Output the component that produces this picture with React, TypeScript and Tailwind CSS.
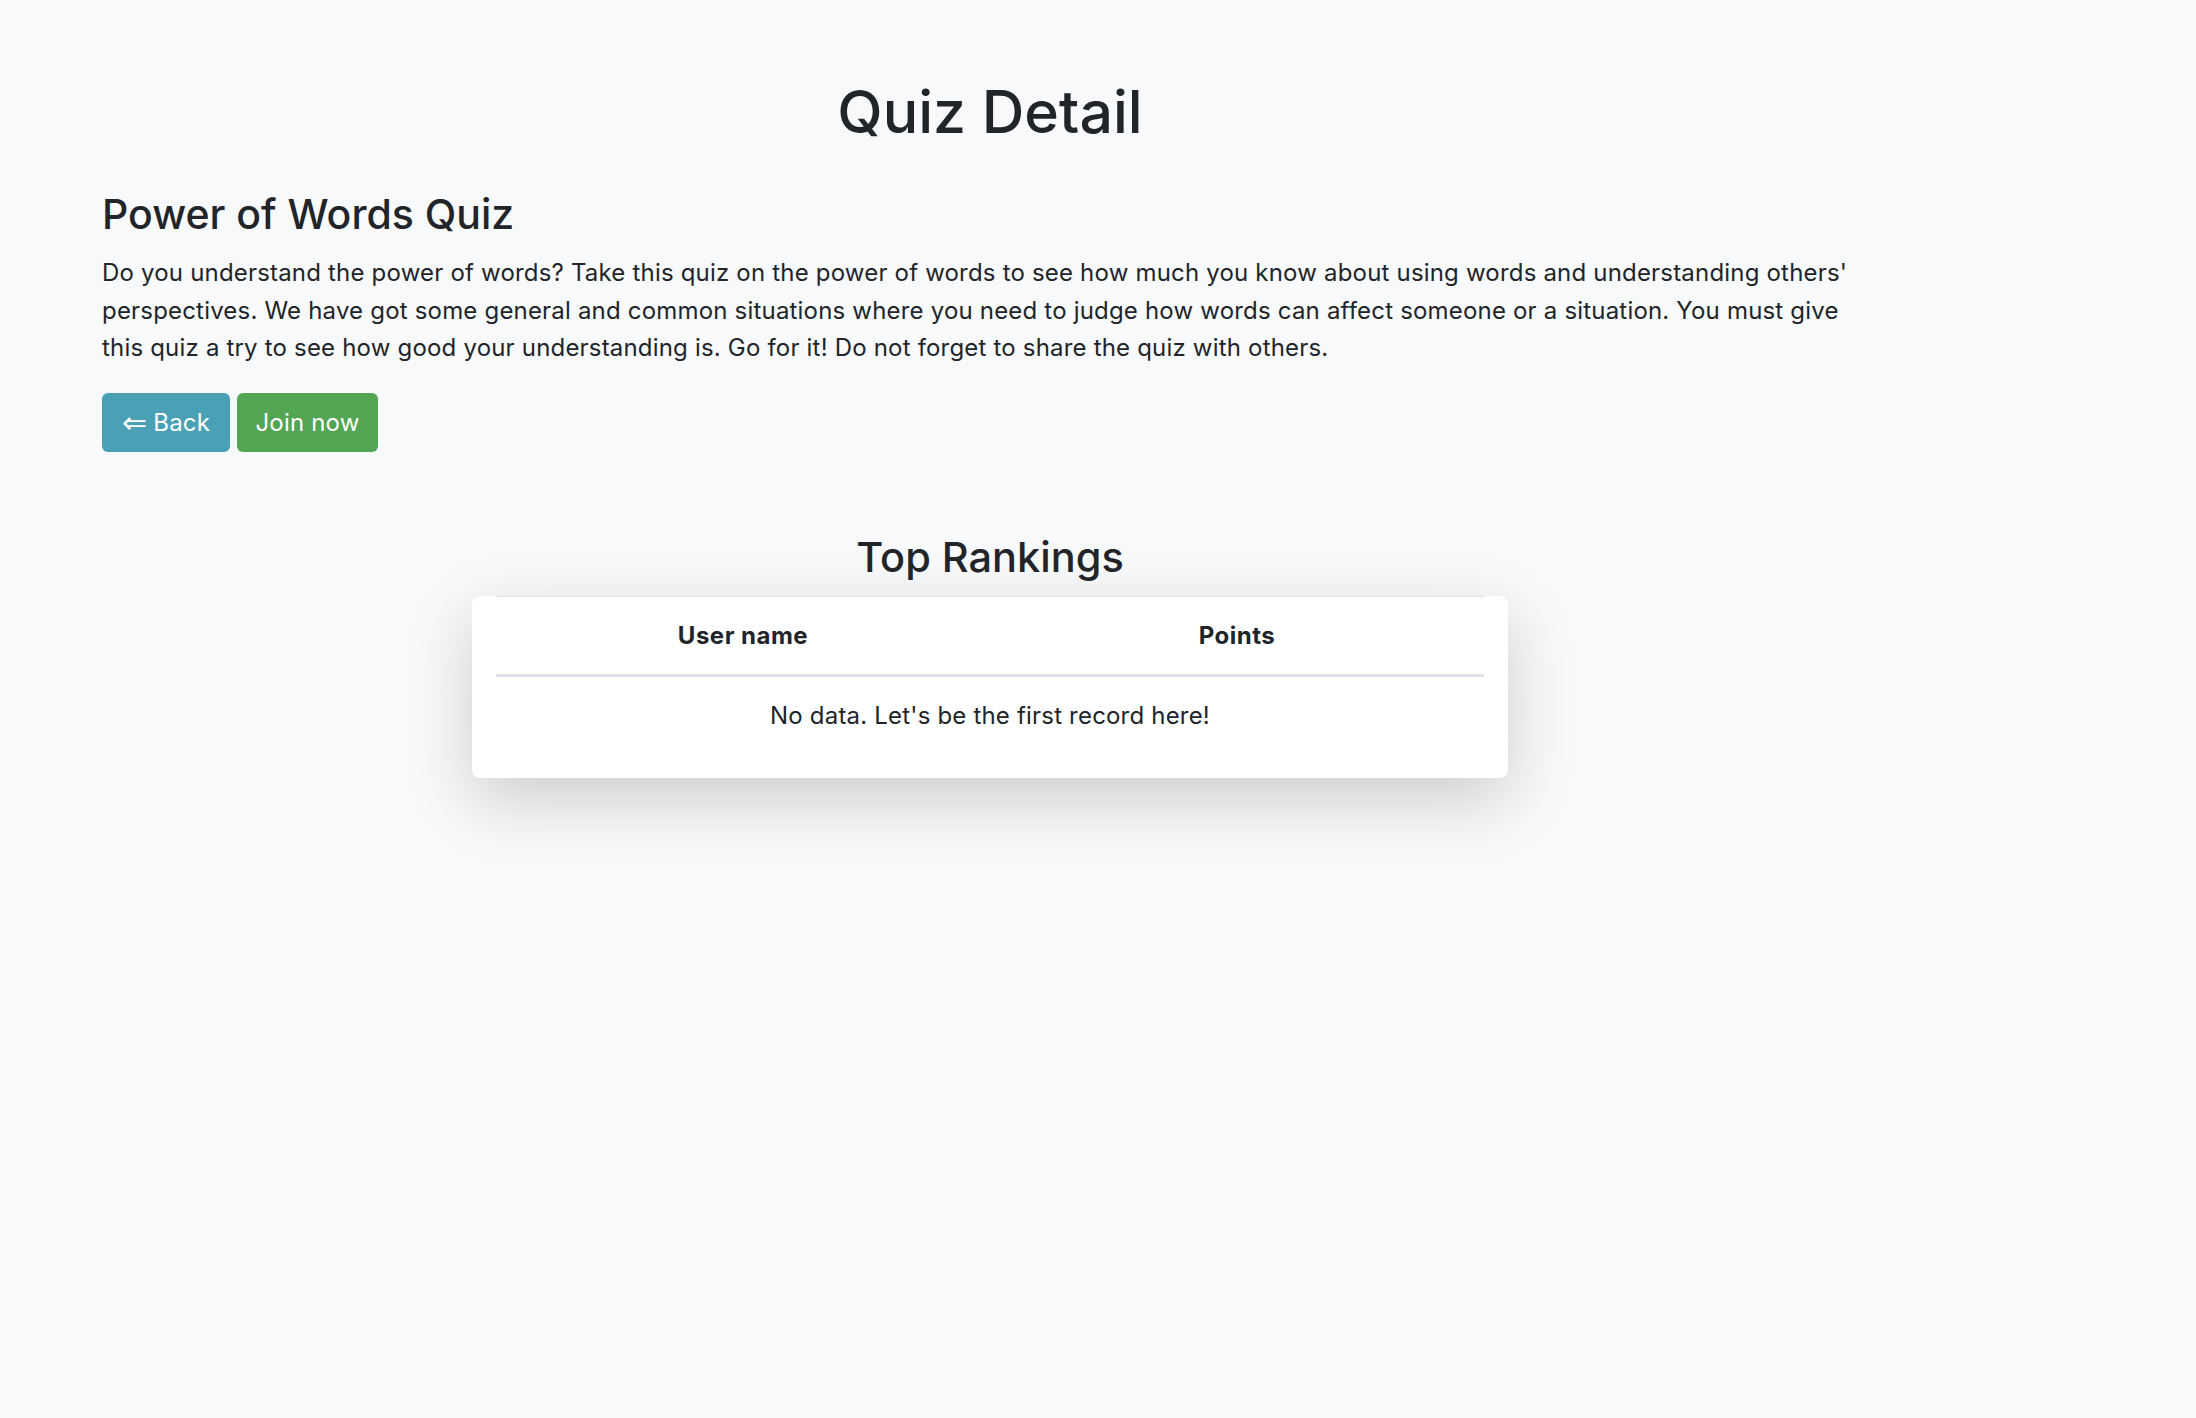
import React from 'react';

const description =
  "Do you understand the power of words? Take this quiz on the power of words to see how much you know about using words and understanding others' perspectives. We have got some general and common situations where you need to judge how words can affect someone or a situation. You must give this quiz a try to see how good your understanding is. Go for it! Do not forget to share the quiz with others.";

type Ranking = { name: string; points: number };

const rankings: Ranking[] = [];

export default function App() {
  return (
    <div className="min-h-screen bg-[#f8f9fa] text-[#212529] font-['Inter','Liberation_Sans',sans-serif]">
      <div className="ml-[102px] w-[1776px] pt-[76px]">
        {/* page title */}
        <h1 className="text-center text-[59px] leading-[72px] font-medium">Quiz Detail</h1>

        {/* quiz info */}
        <h2 className="mt-[41px] text-[41px] leading-[50px] font-medium">Power of Words Quiz</h2>
        <p className="mt-[15px] text-[24px] leading-[37.7px] tracking-[0.19px]">{description}</p>

        <div className="mt-[26px] flex gap-[7px]">
          <button className="h-[59px] w-[128px] rounded-[6px] bg-[#4aa0b5] text-[24px] tracking-[0.19px] text-white flex items-center justify-center gap-[6px]">
            <span className="text-[30px] leading-none font-['DejaVu_Sans',sans-serif]">⇐</span>
            <span>Back</span>
          </button>
          <button className="h-[59px] w-[141px] rounded-[6px] bg-[#52a552] text-[24px] tracking-[0.19px] text-white flex items-center justify-center">
            Join now
          </button>
        </div>

        {/* rankings */}
        <h2 className="mt-[79px] text-center text-[41.5px] leading-[53px] font-medium">Top Rankings</h2>
        <div className="mx-auto mt-[12px] w-[1036px] rounded-[8px] bg-white px-[24px] pb-[23px] shadow-[0_22px_67px_rgba(0,0,0,0.175)]">
          <table className="w-full table-fixed border-collapse text-[24px] leading-[34px] tracking-[0.19px]">
            <thead>
              <tr>
                <th className="w-1/2 border-t border-b-[3px] border-[#dee2e6] pt-[22px] pb-[21px] font-bold tracking-[0.5px]">User name</th>
                <th className="w-1/2 border-t border-b-[3px] border-[#dee2e6] pt-[22px] pb-[21px] font-bold tracking-[0.5px]">Points</th>
              </tr>
            </thead>
            <tbody>
              {rankings.length === 0 ? (
                <tr>
                  <td colSpan={2} className="pt-[22px] pb-[22px] text-center">
                    No data. Let's be the first record here!
                  </td>
                </tr>
              ) : (
                rankings.map((r) => (
                  <tr key={r.name}>
                    <td className="py-[22px] text-center">{r.name}</td>
                    <td className="py-[22px] text-center">{r.points}</td>
                  </tr>
                ))
              )}
            </tbody>
          </table>
        </div>
      </div>
    </div>
  );
}
